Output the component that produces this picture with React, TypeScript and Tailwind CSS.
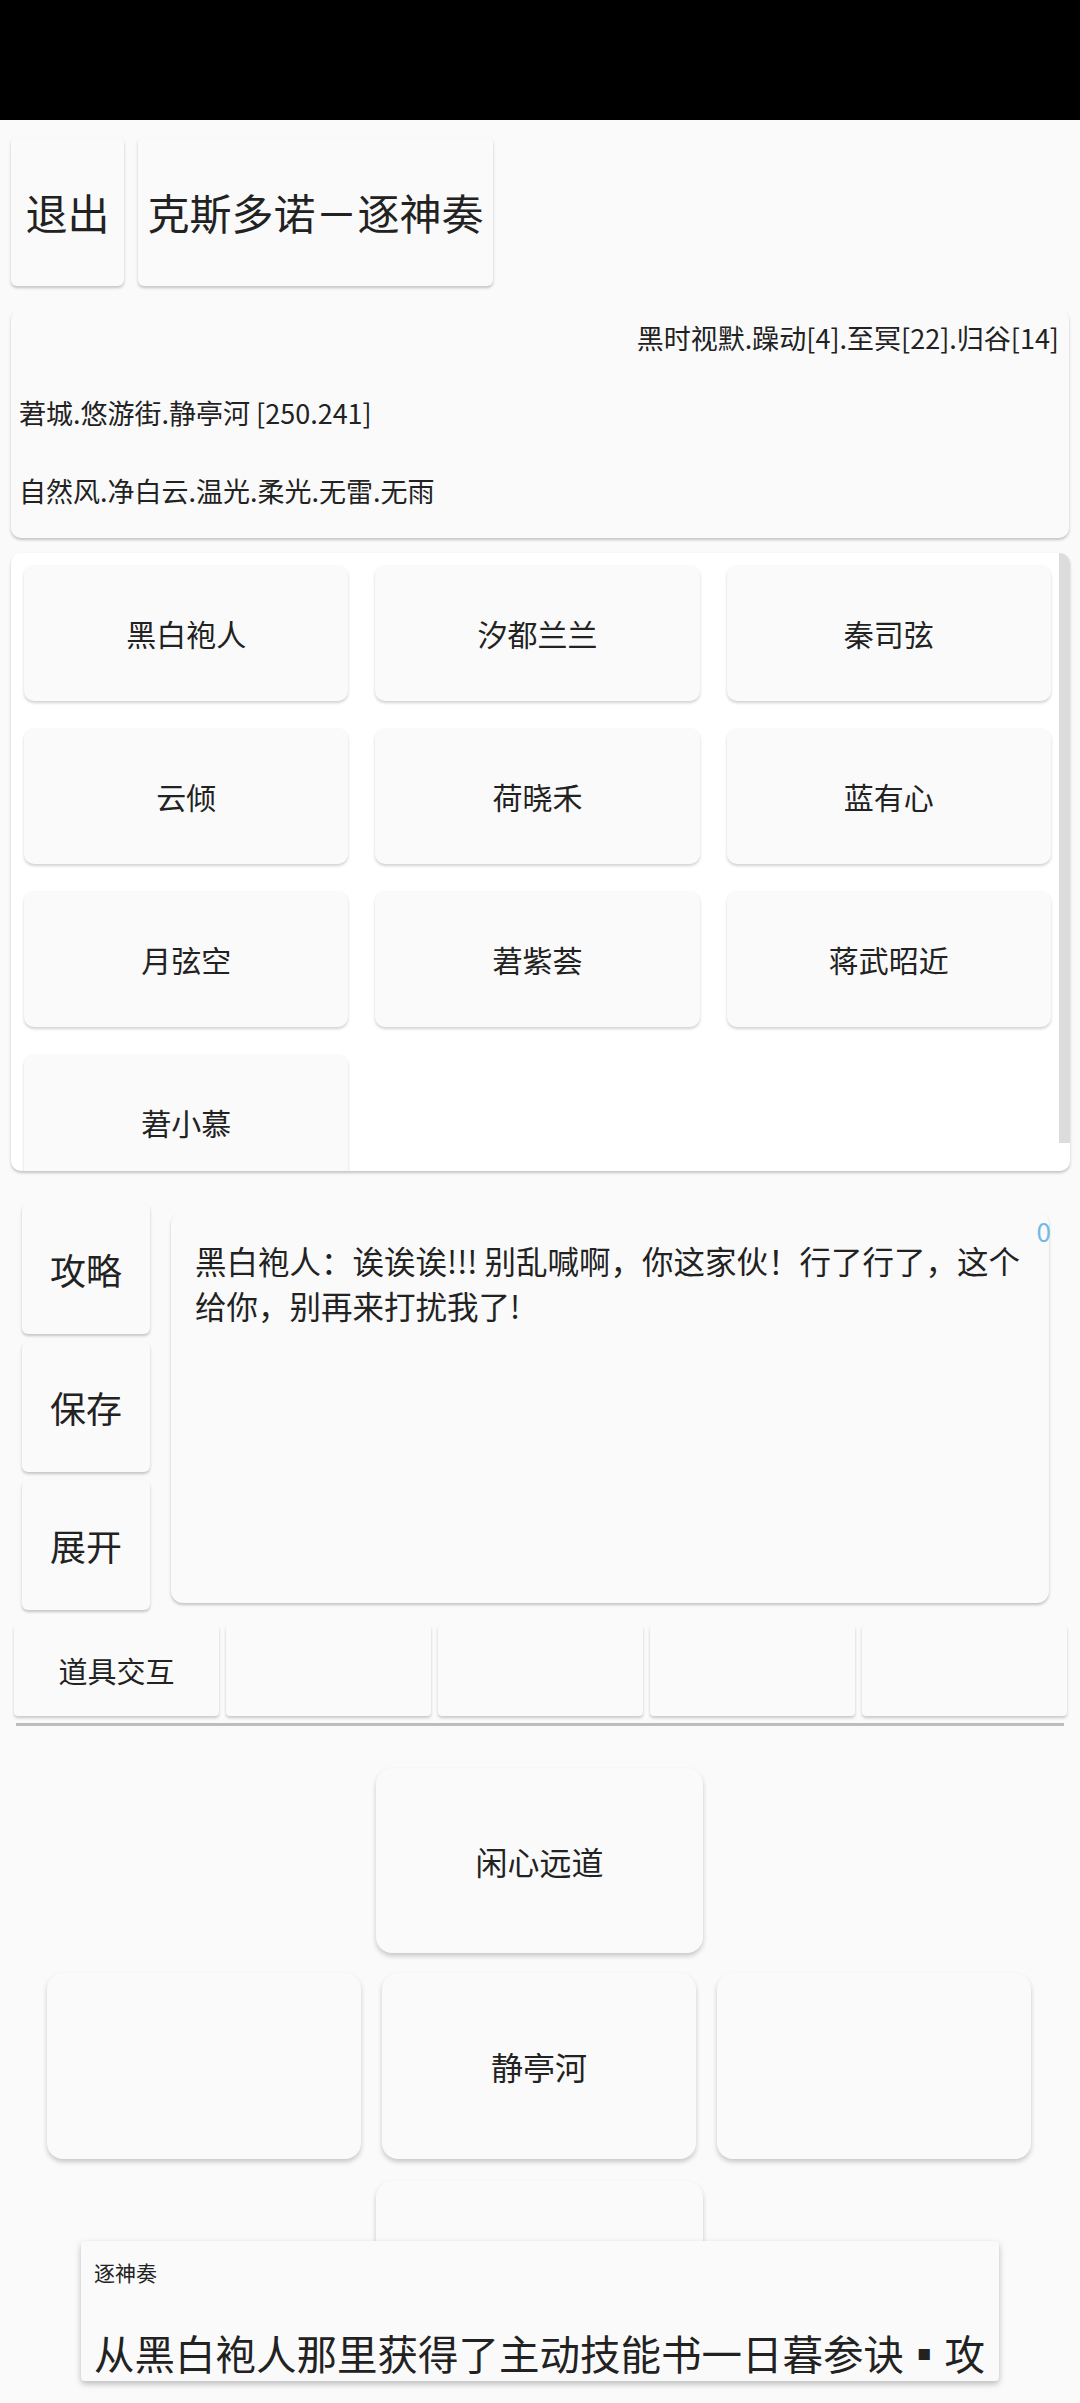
import React from 'react';

const font = { fontFamily: '"Noto Sans CJK SC", "Noto Sans", sans-serif' };

const people = ['黑白袍人', '汐都兰兰', '秦司弦', '云倾', '荷晓禾', '蓝有心', '月弦空', '莙紫荟', '蒋武昭近', '莙小慕'];
const items = ['道具交互', '', '', '', ''];

const cardShadow = 'shadow-[0_2px_3px_rgba(0,0,0,0.22)]';

const SideButton: React.FC<{ label: string }> = ({ label }) => (
  <div className={`w-[128px] h-[130px] rounded-[6px] bg-[#fafafa] ${cardShadow} flex items-center justify-center text-[36px] text-[#222]`}>
    {label}
  </div>
);

const MapNode: React.FC<{ label?: string; wide?: boolean }> = ({ label, wide }) => (
  <div className={`${wide ? 'w-[327px] h-[185px]' : 'w-[314px] h-[186px]'} rounded-[16px] bg-[#fafafa] shadow-[0_3px_5px_rgba(0,0,0,0.2)] flex items-center justify-center text-[32px] text-[#222]`}>
    {label}
  </div>
);

const App: React.FC = () => {
  return (
    <div className="relative w-[1080px] h-[2403px] overflow-hidden bg-[#fafafa] text-[#222]" style={font}>
      <div className="h-[120px] bg-black" />

      {/* top buttons */}
      <div className="mt-[17px] ml-[11px] flex gap-[14px]">
        <div className={`w-[113px] h-[149px] rounded-[6px] bg-[#fafafa] ${cardShadow} flex items-center justify-center text-[42px]`}>退出</div>
        <div className={`w-[355px] h-[149px] rounded-[6px] bg-[#fafafa] ${cardShadow} flex items-center justify-center text-[42px]`}>克斯多诺－逐神奏</div>
      </div>

      {/* info card */}
      <div className={`mt-[23px] ml-[11px] w-[1058px] h-[229px] rounded-[10px] bg-[#fafafa] ${cardShadow} pl-[8px] pr-[10px] text-[27px] leading-[36px]`}>
        <div className="pt-[11px] text-right">黑时视默.躁动[4].至冥[22].归谷[14]</div>
        <div className="mt-[39px]">莙城.悠游街.静亭河 [250.241]</div>
        <div className="mt-[42px]">自然风.净白云.温光.柔光.无雷.无雨</div>
      </div>

      {/* people grid */}
      <div className={`relative mt-[15px] ml-[11px] w-[1059px] h-[618px] rounded-[10px] bg-white ${cardShadow} overflow-hidden`}>
        <div className="grid grid-cols-3 gap-x-[27px] gap-y-[27px] pl-[13px] pr-[19px] pt-[12px]">
          {people.map(p => (
            <div key={p} className="h-[136px] rounded-[10px] bg-[#fafafa] shadow-[0_2px_3px_rgba(0,0,0,0.18)] flex items-center justify-center text-[30px]">
              {p}
            </div>
          ))}
        </div>
        <div className="absolute right-0 top-0 w-[11px] h-[590px] bg-[#dcdcdc]" />
      </div>

      {/* dialog area */}
      <div className="mt-[33px] pl-[22px] flex">
        <div className="flex flex-col gap-[8px]">
          <SideButton label="攻略" />
          <SideButton label="保存" />
          <SideButton label="展开" />
        </div>
        <div className={`relative ml-[21px] mt-[8px] w-[878px] h-[391px] rounded-[12px] bg-[#fafafa] ${cardShadow} pl-[24px] pr-[14px] pt-[26px] text-[31.5px] leading-[45px]`}>
          黑白袍人：诶诶诶!!! 别乱喊啊，你这家伙！行了行了，这个<br />给你，别再来打扰我了!
          <span className="absolute right-[-2px] top-[4px] text-[26px] leading-[30px] text-[#72b9e6]">0</span>
        </div>
      </div>

      {/* items row */}
      <div className="mt-[15px] ml-[14px] flex gap-[7px]">
        {items.map((it, i) => (
          <div key={i} className="w-[205px] h-[91px] rounded-[4px] bg-[#fafafa] shadow-[0_2px_3px_rgba(0,0,0,0.2)] flex items-center justify-center text-[29px]">
            {it}
          </div>
        ))}
      </div>
      <div className="mt-[7px] ml-[16px] w-[1048px] h-[3px] bg-[#bdbdbd]" />

      {/* map */}
      <div className="mt-[42px] flex flex-col items-center">
        <div className="ml-[-1px]"><MapNode label="闲心远道" wide /></div>
        <div className="mt-[20px] ml-[-2px] flex gap-[21px]">
          <MapNode />
          <MapNode label="静亭河" />
          <MapNode />
        </div>
        <div className="mt-[22px] ml-[-1px]"><MapNode wide /></div>
      </div>

      {/* toast */}
      <div className="absolute left-[81px] top-[2241px] w-[918px] h-[140px] rounded-[4px] bg-[#fafafa] shadow-[0_3px_6px_rgba(0,0,0,0.25)] px-[13px] overflow-hidden">
        <div className="mt-[17px] text-[21px] leading-[28px]">逐神奏</div>
        <div className="mt-[43px] text-[40.5px] leading-[48px] whitespace-nowrap">从黑白袍人那里获得了主动技能书一日暮参诀▪攻</div>
      </div>
    </div>
  );
};

export default App;
